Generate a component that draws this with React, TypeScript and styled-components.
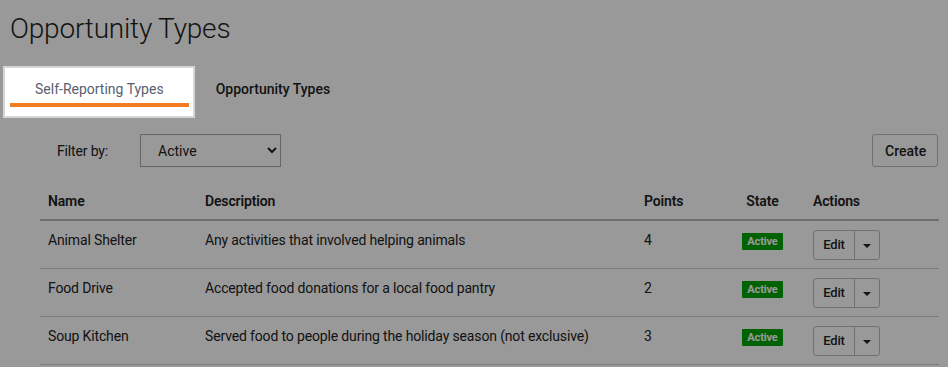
import { FC } from "react"
import styled, { createGlobalStyle } from "styled-components"

interface OpportunityType {
  name: string
  description: string
  points: number
  state: string
}

const types: OpportunityType[] = [
  { name: "Animal Shelter", description: "Any activities that involved helping animals", points: 4, state: "Active" },
  { name: "Food Drive", description: "Accepted food donations for a local food pantry", points: 2, state: "Active" },
  {
    name: "Soup Kitchen",
    description: "Served food to people during the holiday season (not exclusive)",
    points: 3,
    state: "Active",
  },
]

const GlobalStyle = createGlobalStyle`
  html, body {
    margin: 0;
    padding: 0;
    background: #ffffff;
    overflow: hidden;
  }

  body {
    font-family: Roboto, "Liberation Sans", sans-serif;
    letter-spacing: -0.15px;
    color: #222;
  }

  * {
    box-sizing: border-box;
  }
`

const Page = styled.div`
  padding: 0 10px;
  width: 948px;
  height: 367px;
`

const Heading = styled.h1`
  margin: 0;
  padding-top: 11px;
  font-size: 28px;
  font-weight: 300;
  line-height: 36px;
  letter-spacing: -0.2px;
  color: #1e1e1e;
`

const TabList = styled.div`
  display: flex;
  align-items: flex-end;
  gap: 2px;
  margin-top: 26px;
`

const Tab = styled.div<{ $active?: boolean; $highlight?: boolean }>`
  position: relative;
  z-index: ${(p) => (p.$highlight ? 1001 : "auto")};
  padding: 6px 25px 8px;
  font-size: 14px;
  line-height: 20px;
  letter-spacing: 0;
  font-weight: ${(p) => (p.$active ? 400 : 500)};
  color: ${(p) => (p.$active ? "#58606e" : "#1e1e1e")};

  ${(p) =>
    p.$active &&
    `
    &::after {
      content: "";
      position: absolute;
      left: 0;
      right: 0;
      bottom: 0;
      height: 4px;
      background: #f47c20;
    }
  `}

  ${(p) =>
    p.$highlight &&
    `
    &::before {
      content: "";
      position: absolute;
      top: -7px;
      left: -7px;
      right: -6px;
      bottom: -11px;
      background: #fff;
      border: 2px solid #d6d6d6;
      z-index: -1;
    }
  `}
`

const Content = styled.div`
  margin-left: 30px;
  margin-top: 27px;
`

const FilterBar = styled.div`
  display: flex;
  align-items: center;
  padding-left: 17px;
`

const FilterLabel = styled.label`
  font-size: 14px;
  width: 83px;
`

const Select = styled.select`
  width: 141px;
  height: 33px;
  padding: 0 10px 0 13px;
  font-family: inherit;
  font-size: 14px;
  color: #222;
  background: #fff;
  border: 1px solid #aaa;
  border-radius: 0;
`

const Button = styled.button`
  height: 33px;
  padding: 0 12px;
  font-family: inherit;
  font-size: 14px;
  font-weight: 500;
  color: #222;
  background: #fff;
  border: 1px solid #bbb;
  border-radius: 3px;
`

const CreateButton = styled(Button)`
  margin-left: auto;
  width: 66px;
`

const Table = styled.table`
  width: 899px;
  margin-top: 15px;
  border-collapse: collapse;
  font-size: 14px;
  line-height: 20px;
`

const HeadCell = styled.th<{ $width?: number; $center?: boolean }>`
  width: ${(p) => (p.$width ? `${p.$width}px` : "auto")};
  padding: 9px 8px 8px;
  text-align: ${(p) => (p.$center ? "center" : "left")};
  font-weight: 600;
  border-bottom: 2px solid #b8b8b8;
`

const Cell = styled.td<{ $center?: boolean }>`
  padding: 9px 8px 8px;
  vertical-align: top;
  text-align: ${(p) => (p.$center ? "center" : "left")};
  border-bottom: 1px solid #cfcfcf;
`

const Badge = styled.span`
  display: inline-block;
  margin-top: 3px;
  padding: 0 5px;
  font-size: 11px;
  line-height: 17px;
  font-weight: 700;
  color: #fff;
  background: #00a400;
  border-radius: 1px;
`

const SplitButton = styled.div`
  display: inline-flex;
  height: 30px;
  border: 1px solid #bbb;
  border-radius: 3px;
  background: #fff;
`

const SplitMain = styled.span`
  display: flex;
  align-items: center;
  justify-content: center;
  width: 41px;
  font-size: 13px;
  font-weight: 500;
  border-right: 1px solid #bbb;
`

const SplitCaret = styled.span`
  display: flex;
  align-items: center;
  justify-content: center;
  width: 24px;

  &::after {
    content: "";
    border-left: 4px solid transparent;
    border-right: 4px solid transparent;
    border-top: 4px solid #222;
    margin-top: 2px;
  }
`

const Backdrop = styled.div`
  position: fixed;
  inset: 0;
  background: rgba(0, 0, 0, 0.4);
  z-index: 1000;
`

const App: FC = () => {
  return (
    <Page>
      <GlobalStyle />
      <Heading>Opportunity Types</Heading>

      <TabList>
        <Tab $active $highlight>
          Self-Reporting Types
        </Tab>
        <Tab>Opportunity Types</Tab>
      </TabList>

      <Content>
        <FilterBar>
          <FilterLabel>Filter by:</FilterLabel>
          <Select defaultValue="active">
            <option value="active">Active</option>
            <option value="inactive">Inactive</option>
          </Select>
          <CreateButton>Create</CreateButton>
        </FilterBar>

        <Table>
          <thead>
            <tr>
              <HeadCell $width={157}>Name</HeadCell>
              <HeadCell $width={439}>Description</HeadCell>
              <HeadCell $width={84}>Points</HeadCell>
              <HeadCell $width={85} $center>
                State
              </HeadCell>
              <HeadCell>Actions</HeadCell>
            </tr>
          </thead>
          <tbody>
            {types.map((type, index) => (
              <tr key={index}>
                <Cell>{type.name}</Cell>
                <Cell>{type.description}</Cell>
                <Cell>{type.points}</Cell>
                <Cell $center>
                  <Badge>{type.state}</Badge>
                </Cell>
                <Cell>
                  <SplitButton>
                    <SplitMain>Edit</SplitMain>
                    <SplitCaret />
                  </SplitButton>
                </Cell>
              </tr>
            ))}
          </tbody>
        </Table>
      </Content>

      <Backdrop />
    </Page>
  )
}

export default App
